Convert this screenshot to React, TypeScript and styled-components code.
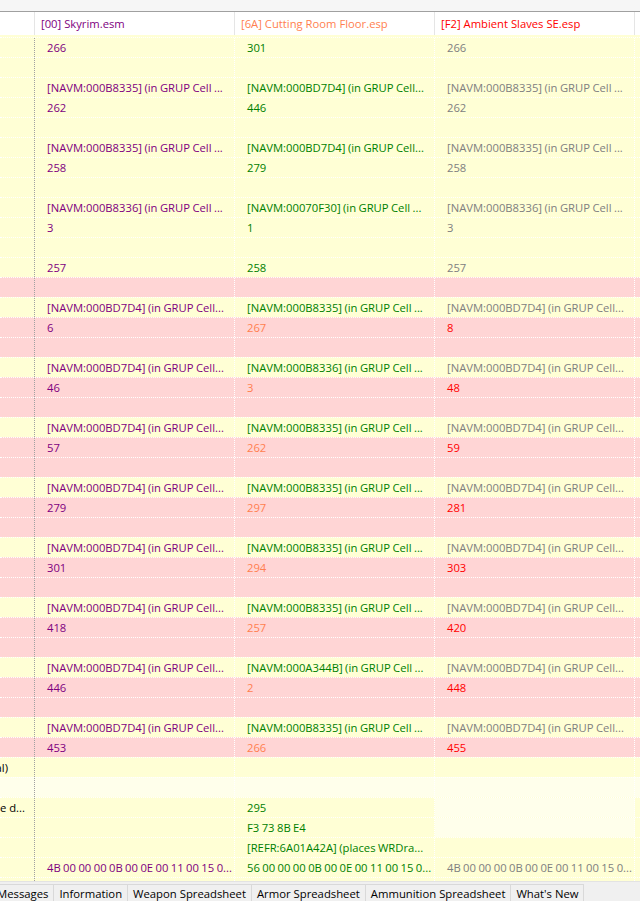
import React from "react";
import styled, { createGlobalStyle } from "styled-components";

type Tone = "master" | "plain" | "override" | "same" | "winner";
type Shade = "yellow" | "pink" | "pale";

interface ICell {
  text: string;
  tone: Tone;
}

interface IRow {
  shade: Shade;
  label?: string;
  labelTrim?: number;
  cells: (ICell | null)[];
  paleLast?: boolean;
}

const toneColors: Record<Tone, string> = {
  master: "#800080",
  plain: "#008000",
  override: "#ff7f50",
  same: "#808080",
  winner: "#ff0000",
};

const shadeColors: Record<Shade, string> = {
  yellow: "#ffffd5",
  pink: "#ffd5d5",
  pale: "#ffffeb",
};

const files = [
  { name: "[00] Skyrim.esm", tone: "master" as Tone },
  { name: "[6A] Cutting Room Floor.esp", tone: "override" as Tone },
  { name: "[F2] Ambient Slaves SE.esp", tone: "winner" as Tone },
];

const navm = (id: string, wide = false) =>
  `[NAVM:${id}] (in GRUP Cell${wide ? " ..." : "..."}`;

const m = (text: string): ICell => ({ text, tone: "master" });
const g = (text: string): ICell => ({ text, tone: "plain" });
const o = (text: string): ICell => ({ text, tone: "override" });
const s = (text: string): ICell => ({ text, tone: "same" });
const r = (text: string): ICell => ({ text, tone: "winner" });

const empty = (shade: Shade): IRow => ({ shade, cells: [null, null, null] });

// edge link where the plugins agree with the master
const sameLink = (master: string, crf: string, crfWide: boolean, nums: [string, string]): IRow[] => [
  empty("yellow"),
  { shade: "yellow", cells: [m(navm(master, true)), g(navm(crf, crfWide)), s(navm(master, true))] },
  { shade: "yellow", cells: [m(nums[0]), g(nums[1]), s(nums[0])] },
];

// edge link where the last plugin changes the triangle
const clashLink = (crf: string, nums: [string, string, string]): IRow[] => [
  empty("pink"),
  { shade: "yellow", cells: [m(navm("000BD7D4")), g(navm(crf, true)), s(navm("000BD7D4"))] },
  { shade: "pink", cells: [m(nums[0]), o(nums[1]), r(nums[2])] },
];

const hex = "00 00 00 0B 00 0E 00 11 00 15 0...";

const rows: IRow[] = [
  { shade: "yellow", cells: [m("266"), g("301"), s("266")] },
  ...sameLink("000B8335", "000BD7D4", false, ["262", "446"]),
  ...sameLink("000B8335", "000BD7D4", false, ["258", "279"]),
  ...sameLink("000B8336", "00070F30", true, ["3", "1"]),
  empty("yellow"),
  { shade: "yellow", cells: [m("257"), g("258"), s("257")] },
  ...clashLink("000B8335", ["6", "267", "8"]),
  ...clashLink("000B8336", ["46", "3", "48"]),
  ...clashLink("000B8335", ["57", "262", "59"]),
  ...clashLink("000B8335", ["279", "297", "281"]),
  ...clashLink("000B8335", ["301", "294", "303"]),
  ...clashLink("000B8335", ["418", "257", "420"]),
  ...clashLink("000A344B", ["446", "2", "448"]),
  ...clashLink("000B8335", ["453", "266", "455"]),
  { shade: "yellow", label: "Flags (Formerly Navmesh Portal)", labelTrim: 26, cells: [null, null, null] },
  { shade: "pale", cells: [null, null, null] },
  { shade: "yellow", label: "Navmesh Grid Cell Reference d...", labelTrim: 9, cells: [null, g("295"), null], paleLast: true },
  { shade: "yellow", cells: [null, g("F3 73 8B E4"), null], paleLast: true },
  { shade: "yellow", cells: [null, g("[REFR:6A01A42A] (places WRDra..."), null] },
  { shade: "yellow", cells: [m("4B " + hex), g("56 " + hex), s("4B " + hex)] },
  empty("yellow"),
];

const tabs = [
  "Messages",
  "Information",
  "Weapon Spreadsheet",
  "Armor Spreadsheet",
  "Ammunition Spreadsheet",
  "What's New",
];

const App = () => {
  return (
    <>
      <GlobalStyle />
      <Window>
        <TopStrip />
        <Header>
          <HeaderCell $color="#000" />
          {files.map((f) => (
            <HeaderCell key={f.name} $color={toneColors[f.tone]}>
              {f.name}
            </HeaderCell>
          ))}
          <HeaderFiller />
        </Header>
        <Body>
          {rows.map((row, i) => (
            <Row key={i} $bg={shadeColors[row.shade]}>
              <LabelCell $trim={row.labelTrim ?? 0}>{row.label}</LabelCell>
              {row.cells.map((cell, j) => (
                <Cell
                  key={j}
                  $color={cell ? toneColors[cell.tone] : "#000"}
                  $bg={row.paleLast && j === 2 ? shadeColors.pale : "transparent"}
                >
                  {cell?.text}
                </Cell>
              ))}
              <Filler />
            </Row>
          ))}
        </Body>
        <TabBar>
          <TabStrip>
            {tabs.map((t) => (
              <Tab key={t}>{t}</Tab>
            ))}
          </TabStrip>
        </TabBar>
      </Window>
    </>
  );
};

export default App;

const GlobalStyle = createGlobalStyle`
  body {
    margin: 0;
    font-family: "Open Sans", "Noto Sans", sans-serif;
    font-size: 11.25px;
  }
`;

const Window = styled.div`
  width: 640px;
  height: 901px;
  display: flex;
  flex-direction: column;
  overflow: hidden;
  background: #f0f0f0;
`;

const TopStrip = styled.div`
  height: 11px;
  flex-shrink: 0;
  background: #f6f6f6;
  border-bottom: 1px solid #a0a0a0;
`;

const columns = "35px 200px 200px 200px 1fr";

const Header = styled.div`
  display: grid;
  grid-template-columns: ${columns};
  height: 23px;
  flex-shrink: 0;
  background: #fff;
`;

const HeaderCell = styled.div<{ $color: string }>`
  color: ${(p) => p.$color};
  line-height: 23px;
  padding-left: 6px;
  border-right: 1px solid #e5e5e5;
  white-space: nowrap;
  overflow: hidden;
`;

const HeaderFiller = styled.div``;

const Body = styled.div`
  flex: 1;
  overflow: hidden;
  padding-top: 2px;
  background: #ffffd5;
`;

const Row = styled.div<{ $bg: string }>`
  display: grid;
  grid-template-columns: ${columns};
  height: 20px;
  box-sizing: border-box;
  border-top: 1px dotted #fff;
  background: ${(p) => p.$bg};
`;

const LabelCell = styled.div<{ $trim: number }>`
  display: flex;
  justify-content: flex-end;
  overflow: hidden;
  white-space: nowrap;
  line-height: 19px;
  color: #000;
  padding-right: ${(p) => p.$trim}px;
  border-right: 1px dotted #a0a0a0;
`;

const Cell = styled.div<{ $color: string; $bg: string }>`
  color: ${(p) => p.$color};
  background: ${(p) => p.$bg};
  line-height: 19px;
  padding-left: 12px;
  white-space: nowrap;
  word-spacing: -0.5px;
  overflow: hidden;
  border-right: 1px dotted #fff;
`;

const Filler = styled.div``;

const TabBar = styled.div`
  height: 20px;
  flex-shrink: 0;
  overflow: hidden;
  background: #f0f0f0;
  border-top: 1px solid #e3e3e3;
  box-sizing: border-box;
`;

const TabStrip = styled.div`
  display: flex;
  margin-left: -8px;
  margin-top: 2px;
  height: 100%;
`;

const Tab = styled.div`
  padding: 0 5px;
  line-height: 18px;
  font-size: 11.3px;
  color: #000;
  white-space: nowrap;
  border-right: 1px solid #d9d9d9;
  border-top: 1px solid #d9d9d9;
`;
